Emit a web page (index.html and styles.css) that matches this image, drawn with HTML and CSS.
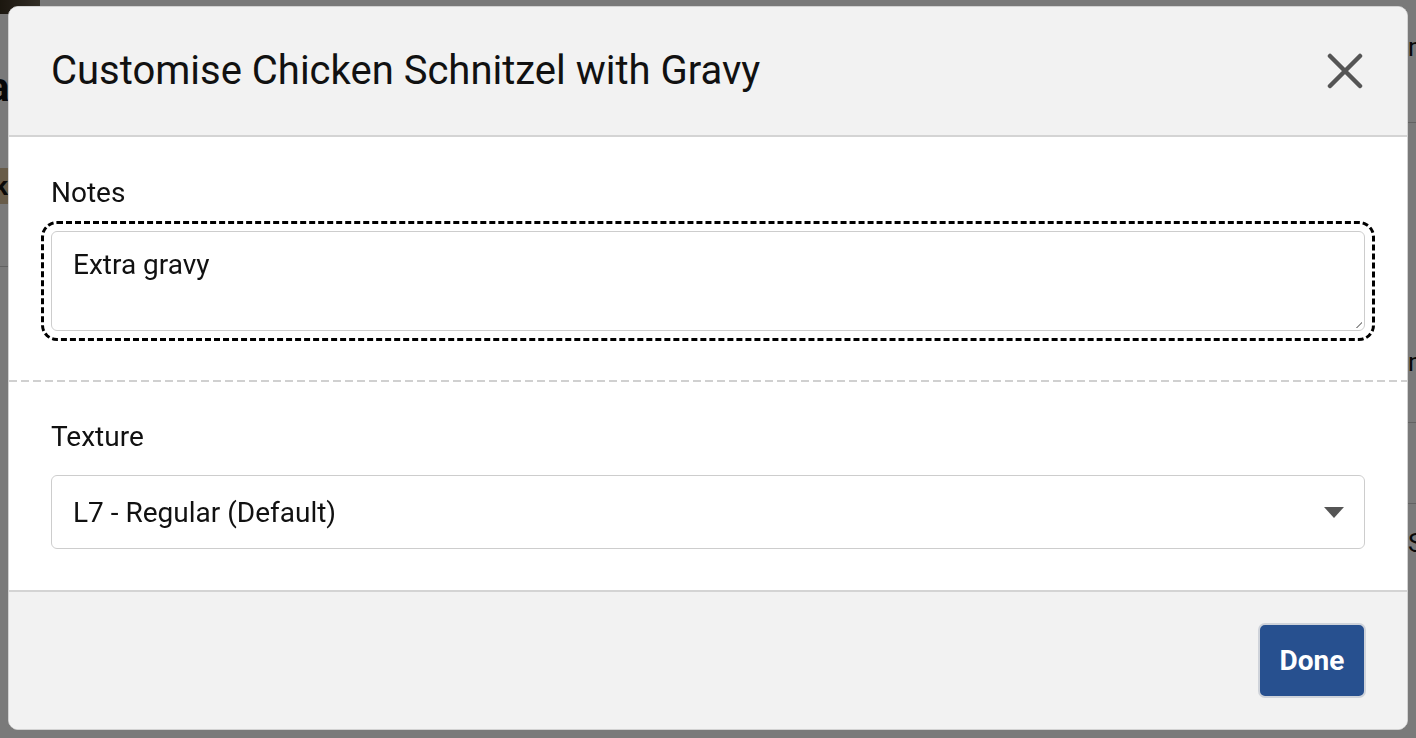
FILE: index.html
```html
<!DOCTYPE html>
<html lang="en">
<head>
<meta charset="utf-8">
<title>Customise</title>
<link rel="stylesheet" href="styles.css">
</head>
<body>
<div class="page">
  <div class="page-left">
    <div class="photo"></div>
    <div class="heading">a</div>
    <div class="tag">k</div>
    <div class="rule"></div>
  </div>
  <div class="page-right">
    <div class="item first">m</div>
    <div class="rule r1"></div>
    <div class="item second">m</div>
    <div class="rule r2"></div>
    <div class="rule r3"></div>
    <div class="item s">S</div>
  </div>
</div>
<div class="backdrop">
  <div class="modal" role="dialog">
    <div class="modal-header">
      <h2 class="modal-title">Customise Chicken Schnitzel with Gravy</h2>
      <button class="close" aria-label="Close">
        <svg width="36" height="36" viewBox="0 0 36 36"><path d="M3 3 L33 33 M33 3 L3 33" stroke="#555" stroke-width="4.5" stroke-linecap="round" fill="none"/></svg>
      </button>
    </div>
    <div class="modal-body">
      <section class="field notes">
        <label class="label">Notes</label>
        <div class="textarea focused">Extra gravy<span class="grip"></span></div>
      </section>
      <div class="separator"></div>
      <section class="field texture">
        <label class="label">Texture</label>
        <div class="select">
          <span>L7 - Regular (Default)</span>
          <svg class="caret" width="20" height="11" viewBox="0 0 20 11"><path d="M0 0 H20 L10 11 Z" fill="#555"/></svg>
        </div>
      </section>
    </div>
    <div class="modal-footer">
      <button class="btn-done">Done</button>
    </div>
  </div>
</div>
</body>
</html>
```
FILE: styles.css
```css
* { box-sizing: border-box; }
html, body { margin: 0; padding: 0; }
body {
  font-family: Roboto, "Noto Sans", "Liberation Sans", sans-serif;
  color: #111;
  background: #fff;
  width: 1416px;
  height: 738px;
  overflow: hidden;
}
.page {
  display: flex;
  justify-content: space-between;
  height: 738px;
}
.page-left { width: 40px; display: flex; flex-direction: column; }
.photo { height: 14px; background: linear-gradient(90deg, #3a3020, #6a6050); }
.heading { font-weight: 700; font-size: 40px; line-height: 48px; margin-top: 50px; margin-left: -12px; color: #111; }
.tag { margin-top: 56px; background: #d9c098; font-weight: 700; font-size: 26px; height: 36px; line-height: 36px; margin-left: -6px; width: 24px; }
.page-left .rule { height: 1px; background: #ccc; margin-top: 62px; }
.page-right { width: 16px; display: flex; flex-direction: column; padding-left: 8px; }
.item { font-size: 26px; line-height: 30px; }
.item.first { margin-top: 32px; }
.page-right .rule { height: 1px; background: #ccc; margin-left: -8px; }
.r1 { margin-top: 60px; }
.item.second { margin-top: 224px; }
.r2 { margin-top: 45px; }
.r3 { margin-top: 80px; }
.item.s { margin-top: 24px; }

.backdrop {
  position: fixed;
  inset: 0;
  background: rgba(0, 0, 0, 0.52);
  padding: 6px 8px 8px 8px;
}
.modal {
  width: 1400px;
  height: 724px;
  background: #fff;
  border: 1px solid #d2d2d2;
  border-radius: 10px;
  overflow: hidden;
  display: flex;
  flex-direction: column;
}
.modal-header {
  height: 130px;
  background: #f2f2f2;
  border-bottom: 2px solid #d4d4d4;
  display: flex;
  align-items: center;
  justify-content: space-between;
  padding: 0 44px 0 42px;
  flex: none;
}
.modal-title {
  margin: 0;
  font-weight: 400;
  font-size: 40px;
  color: #111;
  padding-bottom: 2px;
}
.close {
  border: 0;
  background: none;
  padding: 0;
  width: 36px;
  height: 36px;
  display: flex;
  margin-top: -1px;
}
.modal-body { flex: 1; display: flex; flex-direction: column; }
.field { padding: 0 42px; }
.notes {
  height: 243px;
  flex: none;
  padding-top: 40px;
}
.separator {
  height: 2px;
  flex: none;
  background-image: repeating-linear-gradient(90deg, #d0d0d0 0 8px, transparent 8px 12px);
}
.label { display: block; font-size: 28px; line-height: 32px; color: #111; }
.textarea {
  margin-top: 22px;
  height: 100px;
  border: 1.5px solid #cdcdcd;
  border-radius: 6px;
  padding: 16px 21px;
  font-size: 28px;
  line-height: 34px;
  position: relative;
}
.textarea.focused {
  outline: 3px dashed #000;
  outline-offset: 7px;
}
.grip {
  position: absolute;
  right: 2px;
  bottom: 2px;
  width: 6px;
  height: 6px;
  background: linear-gradient(135deg, transparent 45%, #999 45%, #999 60%, transparent 60%);
}
.texture { padding-top: 39px; flex: 1; }
.select {
  margin-top: 22px;
  height: 74px;
  border: 1.5px solid #cdcdcd;
  border-radius: 6px;
  padding: 0 20px 0 21px;
  display: flex;
  align-items: center;
  justify-content: space-between;
  font-size: 28px;
}
.caret { margin-top: 1px; }
.modal-footer {
  height: 139px;
  flex: none;
  background: #f2f2f2;
  border-top: 2px solid #d4d4d4;
  display: flex;
  justify-content: flex-end;
  align-items: flex-start;
  padding: 31px 41px 0 0;
}
.btn-done {
  width: 108px;
  height: 75px;
  background: #27508f;
  border: 2px solid #cfd3da;
  border-radius: 7px;
  color: #fff;
  font-family: Roboto, "Noto Sans", sans-serif;
  font-weight: 700;
  font-size: 28px;
  padding: 0;
}
```
